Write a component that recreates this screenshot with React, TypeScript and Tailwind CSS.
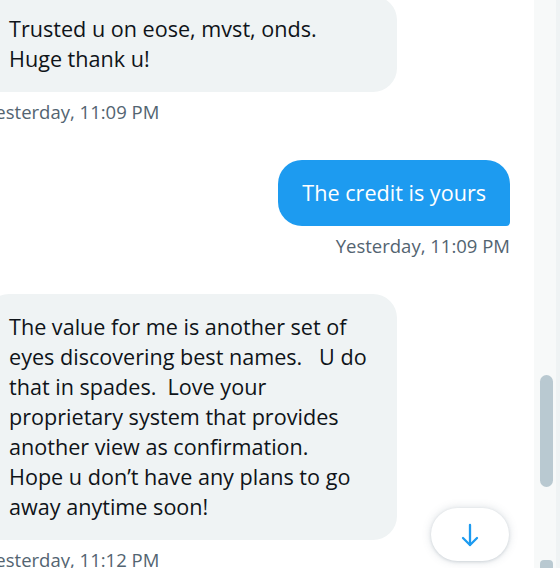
type Msg = { side: "in" | "out"; lines: string[]; time: string };

const messages: Msg[] = [
  { side: "in", lines: ["Trusted u on eose, mvst, onds.", "Huge thank u!"], time: "Yesterday, 11:09 PM" },
  { side: "out", lines: ["The credit is yours"], time: "Yesterday, 11:09 PM" },
  {
    side: "in",
    lines: [
      "The value for me is another set of",
      "eyes discovering best names.\u00a0\u00a0 U do",
      "that in spades.\u00a0 Love your",
      "proprietary system that provides",
      "another view as confirmation.",
      "Hope u don\u2019t have any plans to go",
      "away anytime soon!",
    ],
    time: "Yesterday, 11:12 PM",
  },
];

function Bubble({ msg }: { msg: Msg }) {
  const out = msg.side === "out";
  return (
    <div className={`flex flex-col ${out ? "items-end" : "items-start"}`}>
      <div
        className={
          out
            ? "bg-[#1d9bf0] text-white rounded-[24px] rounded-br-[4px] px-[24px] py-[18px]"
            : "bg-[#eff3f4] text-[#0f1419] rounded-[24px] rounded-bl-[4px] px-[24px] py-[18px] w-[412px]"
        }
      >
        {msg.lines.map((l, i) => (
          <div key={i} className="text-[21.6px] leading-[30px] whitespace-nowrap">
            {l}
          </div>
        ))}
      </div>
      <div className="mt-[8px] text-[18.5px] leading-[24px] text-[#536471] whitespace-nowrap">{msg.time}</div>
    </div>
  );
}

export default function App() {
  return (
    <div
      className="w-[560px] h-[568px] bg-white flex overflow-hidden"
      style={{ fontFamily: '"Open Sans", "Noto Sans", sans-serif' }}
    >
      {/* conversation */}
      <div className="relative flex-1 overflow-hidden">
        <div className="flex flex-col gap-[36px] mt-[-4px] ml-[-15px] mr-[24px]">
          {messages.map((m, i) => (
            <Bubble key={i} msg={m} />
          ))}
        </div>

        {/* jump to bottom */}
        <button className="absolute left-[431px] top-[508px] w-[78px] h-[53px] rounded-full bg-white shadow-[0_0_8px_rgba(101,119,134,0.25),0_1px_3px_rgba(101,119,134,0.2)] flex items-center justify-center">
          <svg width="24" height="24" viewBox="0 0 24 24" fill="none" stroke="#1d9bf0" strokeWidth="2.3" strokeLinecap="round" strokeLinejoin="round">
            <path d="M12 2v20" />
            <path d="M5 15l7 7 7-7" />
          </svg>
        </button>
      </div>

      {/* scrollbar */}
      <div className="w-[22px] bg-[#f7f9f9] flex flex-col items-center">
        <div className="mt-[375px] w-[13px] h-[114px] rounded-full bg-[#b9c9d1] ml-[3px]" />
        <div className="mt-[73px] w-[13px] h-[8px] rounded-t-[4px] bg-[#b9c9d1] ml-[3px]" />
      </div>
      <div className="w-[4px] bg-[#eff3f4]" />
    </div>
  );
}
